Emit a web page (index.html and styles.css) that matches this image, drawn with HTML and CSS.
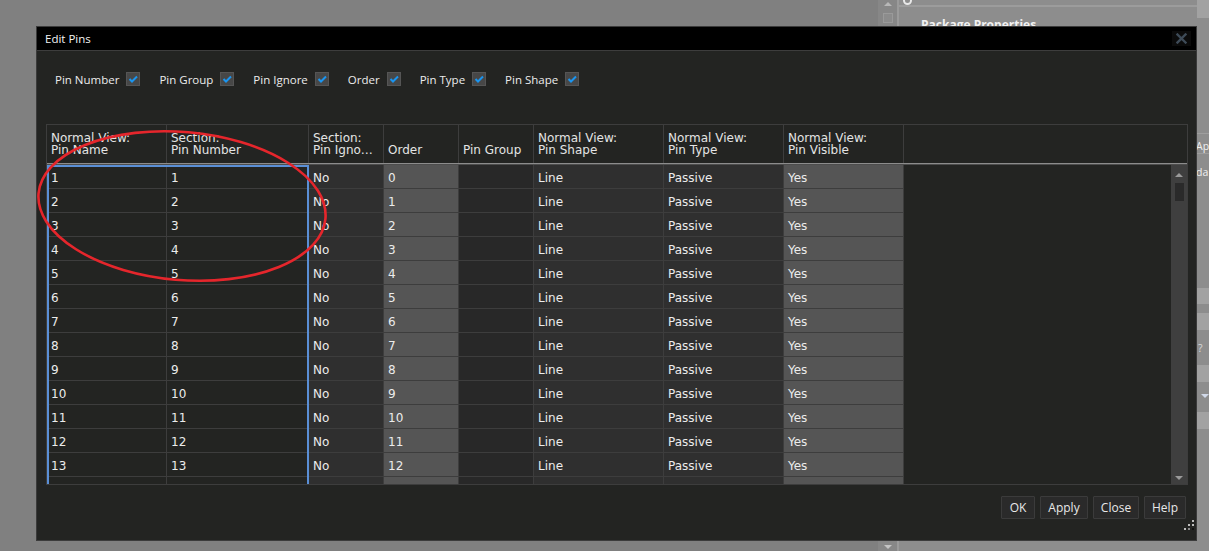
FILE: index.html
```html
<!DOCTYPE html>
<html>
<head>
<meta charset="utf-8">
<title>Edit Pins</title>
<link rel="stylesheet" href="styles.css">
</head>
<body>
<div class="desktop">
  <div class="bgpanel">
    <div class="bg-scroll">
      <span class="bg-up"></span>
      <span class="bg-sq"></span>
      <span class="bg-spacer"></span>
      <span class="bg-down"></span>
    </div>
    <div class="bg-main">
      <div class="bg-head"><span class="bg-circle"></span></div>
      <div class="bg-title">Package Properties</div>
      <div class="bg-band b1"></div>
      <div class="bg-line l1"></div>
      <div class="bg-text t1">Ap</div>
      <div class="bg-line l2"></div>
      <div class="bg-text t2">da</div>
      <div class="bg-band b2"></div>
      <div class="bg-band b3"></div>
      <div class="bg-text t3">?</div>
      <div class="bg-band b4"></div>
      <div class="bg-arrow"></div>
      <div class="bg-band b5"></div>
    </div>
  </div>

  <div class="dialog">
    <div class="titlebar">
      <span class="title">Edit Pins</span>
      <span class="close">
        <svg width="11" height="11" viewBox="0 0 11 11"><path d="M1.5 1.5 L9.5 9.5 M9.5 1.5 L1.5 9.5" stroke="#3e4b58" stroke-width="2.4" stroke-linecap="square"/></svg>
      </span>
    </div>
    <div class="content">
      <div class="filters">
        <label class="filter"><span>Pin Number</span><span class="box"><svg width="14" height="14" viewBox="0 0 14 14"><polyline points="3.5,7 6,9.5 11,4.5" fill="none" stroke="#1a95f0" stroke-width="2"/></svg></span></label>
        <label class="filter"><span>Pin Group</span><span class="box"><svg width="14" height="14" viewBox="0 0 14 14"><polyline points="3.5,7 6,9.5 11,4.5" fill="none" stroke="#1a95f0" stroke-width="2"/></svg></span></label>
        <label class="filter"><span>Pin Ignore</span><span class="box"><svg width="14" height="14" viewBox="0 0 14 14"><polyline points="3.5,7 6,9.5 11,4.5" fill="none" stroke="#1a95f0" stroke-width="2"/></svg></span></label>
        <label class="filter"><span>Order</span><span class="box"><svg width="14" height="14" viewBox="0 0 14 14"><polyline points="3.5,7 6,9.5 11,4.5" fill="none" stroke="#1a95f0" stroke-width="2"/></svg></span></label>
        <label class="filter"><span>Pin Type</span><span class="box"><svg width="14" height="14" viewBox="0 0 14 14"><polyline points="3.5,7 6,9.5 11,4.5" fill="none" stroke="#1a95f0" stroke-width="2"/></svg></span></label>
        <label class="filter"><span>Pin Shape</span><span class="box"><svg width="14" height="14" viewBox="0 0 14 14"><polyline points="3.5,7 6,9.5 11,4.5" fill="none" stroke="#1a95f0" stroke-width="2"/></svg></span></label>
      </div>

      <div class="grid">
        <div class="ghead">
          <div class="hc w1"><span>Normal View:</span><span>Pin Name</span></div>
          <div class="hc w2"><span>Section:</span><span>Pin Number</span></div>
          <div class="hc w3"><span>Section:</span><span>Pin Igno…</span></div>
          <div class="hc w4"><span>Order</span></div>
          <div class="hc w5"><span>Pin Group</span></div>
          <div class="hc w6"><span>Normal View:</span><span>Pin Shape</span></div>
          <div class="hc w7"><span>Normal View:</span><span>Pin Type</span></div>
          <div class="hc w8"><span>Normal View:</span><span>Pin Visible</span></div>
          <div class="hc rest"></div>
        </div>
        <div class="sep"></div>
        <div class="gbody">
          <div class="rows">
            <div class="row"><div class="c w1 dark">1</div><div class="c w2 dark">1</div><div class="c w3 mid">No</div><div class="c w4 gray">0</div><div class="c w5 grp"></div><div class="c w6 mid">Line</div><div class="c w7 mid">Passive</div><div class="c w8 gray">Yes</div></div>
            <div class="row"><div class="c w1 dark">2</div><div class="c w2 dark">2</div><div class="c w3 mid">No</div><div class="c w4 gray">1</div><div class="c w5 grp"></div><div class="c w6 mid">Line</div><div class="c w7 mid">Passive</div><div class="c w8 gray">Yes</div></div>
            <div class="row"><div class="c w1 dark">3</div><div class="c w2 dark">3</div><div class="c w3 mid">No</div><div class="c w4 gray">2</div><div class="c w5 grp"></div><div class="c w6 mid">Line</div><div class="c w7 mid">Passive</div><div class="c w8 gray">Yes</div></div>
            <div class="row"><div class="c w1 dark">4</div><div class="c w2 dark">4</div><div class="c w3 mid">No</div><div class="c w4 gray">3</div><div class="c w5 grp"></div><div class="c w6 mid">Line</div><div class="c w7 mid">Passive</div><div class="c w8 gray">Yes</div></div>
            <div class="row"><div class="c w1 dark">5</div><div class="c w2 dark">5</div><div class="c w3 mid">No</div><div class="c w4 gray">4</div><div class="c w5 grp"></div><div class="c w6 mid">Line</div><div class="c w7 mid">Passive</div><div class="c w8 gray">Yes</div></div>
            <div class="row"><div class="c w1 dark">6</div><div class="c w2 dark">6</div><div class="c w3 mid">No</div><div class="c w4 gray">5</div><div class="c w5 grp"></div><div class="c w6 mid">Line</div><div class="c w7 mid">Passive</div><div class="c w8 gray">Yes</div></div>
            <div class="row"><div class="c w1 dark">7</div><div class="c w2 dark">7</div><div class="c w3 mid">No</div><div class="c w4 gray">6</div><div class="c w5 grp"></div><div class="c w6 mid">Line</div><div class="c w7 mid">Passive</div><div class="c w8 gray">Yes</div></div>
            <div class="row"><div class="c w1 dark">8</div><div class="c w2 dark">8</div><div class="c w3 mid">No</div><div class="c w4 gray">7</div><div class="c w5 grp"></div><div class="c w6 mid">Line</div><div class="c w7 mid">Passive</div><div class="c w8 gray">Yes</div></div>
            <div class="row"><div class="c w1 dark">9</div><div class="c w2 dark">9</div><div class="c w3 mid">No</div><div class="c w4 gray">8</div><div class="c w5 grp"></div><div class="c w6 mid">Line</div><div class="c w7 mid">Passive</div><div class="c w8 gray">Yes</div></div>
            <div class="row"><div class="c w1 dark">10</div><div class="c w2 dark">10</div><div class="c w3 mid">No</div><div class="c w4 gray">9</div><div class="c w5 grp"></div><div class="c w6 mid">Line</div><div class="c w7 mid">Passive</div><div class="c w8 gray">Yes</div></div>
            <div class="row"><div class="c w1 dark">11</div><div class="c w2 dark">11</div><div class="c w3 mid">No</div><div class="c w4 gray">10</div><div class="c w5 grp"></div><div class="c w6 mid">Line</div><div class="c w7 mid">Passive</div><div class="c w8 gray">Yes</div></div>
            <div class="row"><div class="c w1 dark">12</div><div class="c w2 dark">12</div><div class="c w3 mid">No</div><div class="c w4 gray">11</div><div class="c w5 grp"></div><div class="c w6 mid">Line</div><div class="c w7 mid">Passive</div><div class="c w8 gray">Yes</div></div>
            <div class="row"><div class="c w1 dark">13</div><div class="c w2 dark">13</div><div class="c w3 mid">No</div><div class="c w4 gray">12</div><div class="c w5 grp"></div><div class="c w6 mid">Line</div><div class="c w7 mid">Passive</div><div class="c w8 gray">Yes</div></div>
            <div class="row"><div class="c w1 dark"></div><div class="c w2 dark"></div><div class="c w3 mid"></div><div class="c w4 gray"></div><div class="c w5 grp"></div><div class="c w6 mid"></div><div class="c w7 mid"></div><div class="c w8 gray"></div></div>
          </div>
          <div class="empty"></div>
          <div class="vscroll">
            <span class="arr up"></span>
            <span class="thumb"></span>
            <span class="track"></span>
            <span class="arr down"></span>
          </div>
          <div class="selection"></div>
        </div>
      </div>

      <div class="buttons">
        <button class="btn b-ok">OK</button>
        <button class="btn b-apply">Apply</button>
        <button class="btn b-close">Close</button>
        <button class="btn b-help">Help</button>
      </div>
    </div>
    <svg class="grip" width="12" height="12" viewBox="0 0 12 12">
      <rect x="9" y="0" width="2" height="2" fill="#bdbdbd"/>
      <rect x="5" y="4" width="2" height="2" fill="#bdbdbd"/>
      <rect x="9" y="4" width="2" height="2" fill="#bdbdbd"/>
      <rect x="1" y="8" width="2" height="2" fill="#bdbdbd"/>
      <rect x="5" y="8" width="2" height="2" fill="#8a8a8a"/>
      <rect x="9" y="8" width="2" height="2" fill="#111"/>
    </svg>
  </div>

  <svg class="annotation" width="1209" height="551" viewBox="0 0 1209 551">
    <ellipse cx="182" cy="206" rx="144" ry="74" transform="rotate(5 182 206)" fill="none" stroke="#e5262c" stroke-width="2.6"/>
  </svg>
</div>
</body>
</html>
```

FILE: styles.css
```css
html, body {
  margin: 0;
  padding: 0;
}
body {
  background: #808080;
  width: 1209px;
  height: 551px;
  overflow: hidden;
  font-family: "Open Sans", "Noto Sans", sans-serif;
}
.desktop {
  position: relative;
  width: 1209px;
  height: 551px;
}

/* background application panel (behind dialog) */
.bgpanel {
  position: absolute;
  left: 878px;
  top: 0;
  width: 331px;
  height: 551px;
  display: flex;
}
.bg-scroll {
  width: 19px;
  background: #878787;
  display: flex;
  flex-direction: column;
  align-items: center;
  border-right: 2px solid #9b9b9b;
}
.bg-up {
  margin-top: 2px;
  width: 0;
  height: 0;
  border-left: 4px solid transparent;
  border-right: 4px solid transparent;
  border-bottom: 4px solid #b8b8b8;
}
.bg-sq {
  margin-top: 7px;
  width: 8px;
  height: 8px;
  border: 1px solid #9a9a9a;
  background: #8c8c8c;
}
.bg-spacer { flex: 1; }
.bg-down {
  margin-bottom: 2px;
  width: 0;
  height: 0;
  border-left: 4px solid transparent;
  border-right: 4px solid transparent;
  border-top: 4px solid #c4c4c4;
}
.bg-main {
  position: relative;
  flex: 1;
  background: #8d8d8d;
}
.bg-head {
  height: 9px;
  border-bottom: 2px solid #9c9c9c;
  padding-left: 4px;
}
.bg-circle {
  display: block;
  width: 9px;
  height: 9px;
  margin-top: -4px;
  border-radius: 50%;
  border: 2px solid #e8e8e8;
  box-sizing: border-box;
}
.bg-title {
  margin: 9px 0 0 22px;
  color: #f2f2f2;
  font-weight: 700;
  font-size: 12px;
}
.bg-band {
  position: absolute;
  right: 0;
  width: 12px;
  background: #a2a2a2;
}
.b1 { top: 0; height: 18px; }
.b2 { top: 288px; height: 16px; }
.b3 { top: 313px; height: 17px; }
.b4 { top: 365px; height: 17px; }
.b5 { top: 412px; height: 17px; }
.bg-line {
  position: absolute;
  right: 0;
  width: 12px;
  height: 1px;
  background: #9e9e9e;
}
.l1 { top: 133px; }
.l2 { top: 153px; }
.bg-text {
  position: absolute;
  color: #f0f0f0;
  font-size: 10.5px;
  line-height: 14px;
}
.t1 { top: 139px; left: 297px; }
.t2 { top: 165px; left: 297px; }
.t3 { top: 341px; left: 299px; color: #d8d8d8; }
.bg-arrow {
  position: absolute;
  top: 394px;
  left: 302px;
  width: 0;
  height: 0;
  border-left: 4px solid transparent;
  border-right: 4px solid transparent;
  border-top: 4px solid #d0d8e8;
}

/* dialog window */
.dialog {
  position: absolute;
  left: 36px;
  top: 26px;
  width: 1161px;
  height: 515px;
  box-sizing: border-box;
  border: 1px solid #3b3b3b;
  background: #232422;
  display: flex;
  flex-direction: column;
}
.titlebar {
  height: 23px;
  background: #000;
  border-bottom: 1px solid #3d3d3d;
  display: flex;
  align-items: center;
  justify-content: space-between;
  padding: 0 5px 0 8px;
}
.title {
  color: #f4f4f4;
  font-size: 11.5px;
  line-height: 23px;
}
.close {
  width: 19px;
  height: 15px;
  background: #0b0b0b;
  display: flex;
  align-items: center;
  justify-content: center;
}
.close svg { display: block; }

.content {
  flex: 1;
  display: flex;
  flex-direction: column;
  padding: 0 8px 0 9px;
}
.filters {
  height: 56px;
  display: flex;
  align-items: center;
  gap: 19px;
  padding-left: 9px;
}
.filter {
  display: flex;
  align-items: center;
  gap: 7px;
  color: #ececec;
  font-size: 11.5px;
}
.box {
  width: 14px;
  height: 14px;
  box-sizing: border-box;
  background: #474747;
  border: 1px solid #555;
  display: flex;
}
.box svg { display: block; margin: -1px; }

/* data grid */
.grid {
  margin-top: 17px;
  border: 1px solid #3d3d3d;
  font-family: "DejaVu Sans", Verdana, sans-serif;
  font-size: 12px;
  color: #ececec;
}
.ghead {
  display: flex;
  height: 38px;
}
.hc {
  box-sizing: border-box;
  border-right: 1px solid #3d3d3d;
  display: flex;
  flex-direction: column;
  justify-content: flex-end;
  padding: 0 4px 7px;
  line-height: 12px;
  white-space: nowrap;
  overflow: hidden;
  color: #e4e4e4;
}
.hc.rest { flex: 1; border-right: none; }
.w1 { width: 120px; }
.w2 { width: 142px; }
.w3 { width: 75px; }
.w4 { width: 75px; }
.w5 { width: 75px; }
.w6 { width: 130px; }
.w7 { width: 120px; }
.w8 { width: 120px; }
.sep {
  height: 2px;
  background: linear-gradient(#8c8c8c 0 1px, #4d4d4d 1px 2px);
}
.gbody {
  position: relative;
  display: flex;
  height: 319px;
  overflow: hidden;
}
.rows {
  display: flex;
  flex-direction: column;
}
.row {
  display: flex;
  flex: none;
  height: 24px;
}
.c {
  box-sizing: border-box;
  height: 24px;
  line-height: 22px;
  padding: 2px 0 0 4px;
  border-right: 1px solid #3d3d3d;
  border-bottom: 1px solid #3d3d3d;
  white-space: nowrap;
  overflow: hidden;
}
.dark { background: #232422; }
.mid { background: #2f2f2f; }
.gray { background: #555555; }
.grp { background: #282828; }
.empty {
  flex: 1;
  background: #232422;
}
.vscroll {
  width: 16px;
  background: #3f3f3f;
  display: flex;
  flex-direction: column;
  align-items: center;
}
.arr {
  width: 0;
  height: 0;
  border-left: 4px solid transparent;
  border-right: 4px solid transparent;
}
.arr.up {
  margin-top: 8px;
  border-bottom: 4px solid #9a9a9a;
}
.arr.down {
  margin-bottom: 4px;
  border-top: 4px solid #9a9a9a;
}
.thumb {
  margin-top: 6px;
  width: 9px;
  height: 18px;
  background: #2a2a2a;
}
.track { flex: 1; }
.selection {
  position: absolute;
  left: 0;
  top: 0;
  width: 262px;
  height: 330px;
  box-sizing: border-box;
  border: 2px solid #5a8fd6;
  pointer-events: none;
}

/* buttons */
.buttons {
  display: flex;
  justify-content: flex-end;
  gap: 5px;
  margin-top: 11px;
  padding-right: 2px;
}
.btn {
  height: 23px;
  box-sizing: border-box;
  background: #2a2a2a;
  border: 1px solid #3b3b3b;
  border-radius: 1px;
  color: #e8e8e8;
  font-family: "Open Sans", "Noto Sans", sans-serif;
  font-size: 12px;
  padding: 0;
  line-height: 20px;
}
.b-ok { width: 34px; }
.b-apply { width: 48px; }
.b-close { width: 46px; }
.b-help { width: 42px; }

.grip {
  position: absolute;
  right: 1px;
  bottom: 8px;
}

.annotation {
  position: absolute;
  left: 0;
  top: 0;
  pointer-events: none;
}
```
